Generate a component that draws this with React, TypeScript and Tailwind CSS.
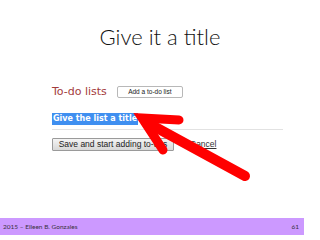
export default function App() {
  return (
    <div className="relative flex h-[240px] w-[320px] flex-col overflow-hidden bg-white">
      <h1 className="pt-[24px] text-center text-[22px] font-light leading-[26px] text-[#111] [font-family:Lato,sans-serif]">
        Give it a title
      </h1>

      <div className="ml-[52px] mt-[36px] flex flex-col">
        <div className="flex h-[12px] items-center gap-[10px]">
          <span className="text-[11px] leading-[12px] text-[#a33c3c] [font-family:'DejaVu_Sans',sans-serif]">To-do lists</span>
          <button className="flex h-[12px] w-[66px] items-center justify-center rounded-[2px] border border-[#b8b8b8] bg-white text-[6.5px] leading-none text-[#222] [font-family:'Liberation_Sans',sans-serif]">
            Add a to-do list
          </button>
        </div>

        <div className="mt-[15px] flex h-[12px]">
          <span className="bg-[#3f8ff0] pl-[1px] pr-[1px] text-[8px] font-bold leading-[12px] text-white [font-family:'DejaVu_Sans',sans-serif]">
            Give the list a title
          </span>
        </div>

        <div className="mt-[4px] h-px w-[231px] bg-[#e2e2e2]" />

        <div className="mt-[8px] flex h-[13px] items-center gap-[16px]">
          <button className="flex h-[13px] w-[122px] items-center justify-center rounded-[1px] border border-[#9a9a9a] bg-gradient-to-b from-[#f4f4f4] to-[#d8d8d8] text-[8.5px] leading-none text-[#222] [font-family:'Liberation_Sans',sans-serif]">
            Save and start adding to-dos
          </button>
          <span className="text-[8.5px] leading-none text-[#333] underline [font-family:'Liberation_Sans',sans-serif]">Cancel</span>
        </div>
      </div>

      <div className="mb-[5px] mt-auto flex h-[17px] w-[304px] items-center justify-between bg-[#cc99ff] pl-[3px] pr-[5px] text-[6.5px] text-[#3a3340] [font-family:Lato,sans-serif]">
        <span>2015 – Eileen B. Gonzales</span>
        <span>61</span>
      </div>

      <svg className="pointer-events-none absolute left-0 top-0" width="320" height="240" viewBox="0 0 320 240">
        <line x1="146" y1="122" x2="245" y2="176" stroke="#ff0000" strokeWidth="10" strokeLinecap="round" />
        <polyline points="179,120 142,118 163,150" fill="none" stroke="#ff0000" strokeWidth="9" strokeLinecap="round" strokeLinejoin="miter" strokeMiterlimit="10" />
      </svg>
    </div>
  )
}
